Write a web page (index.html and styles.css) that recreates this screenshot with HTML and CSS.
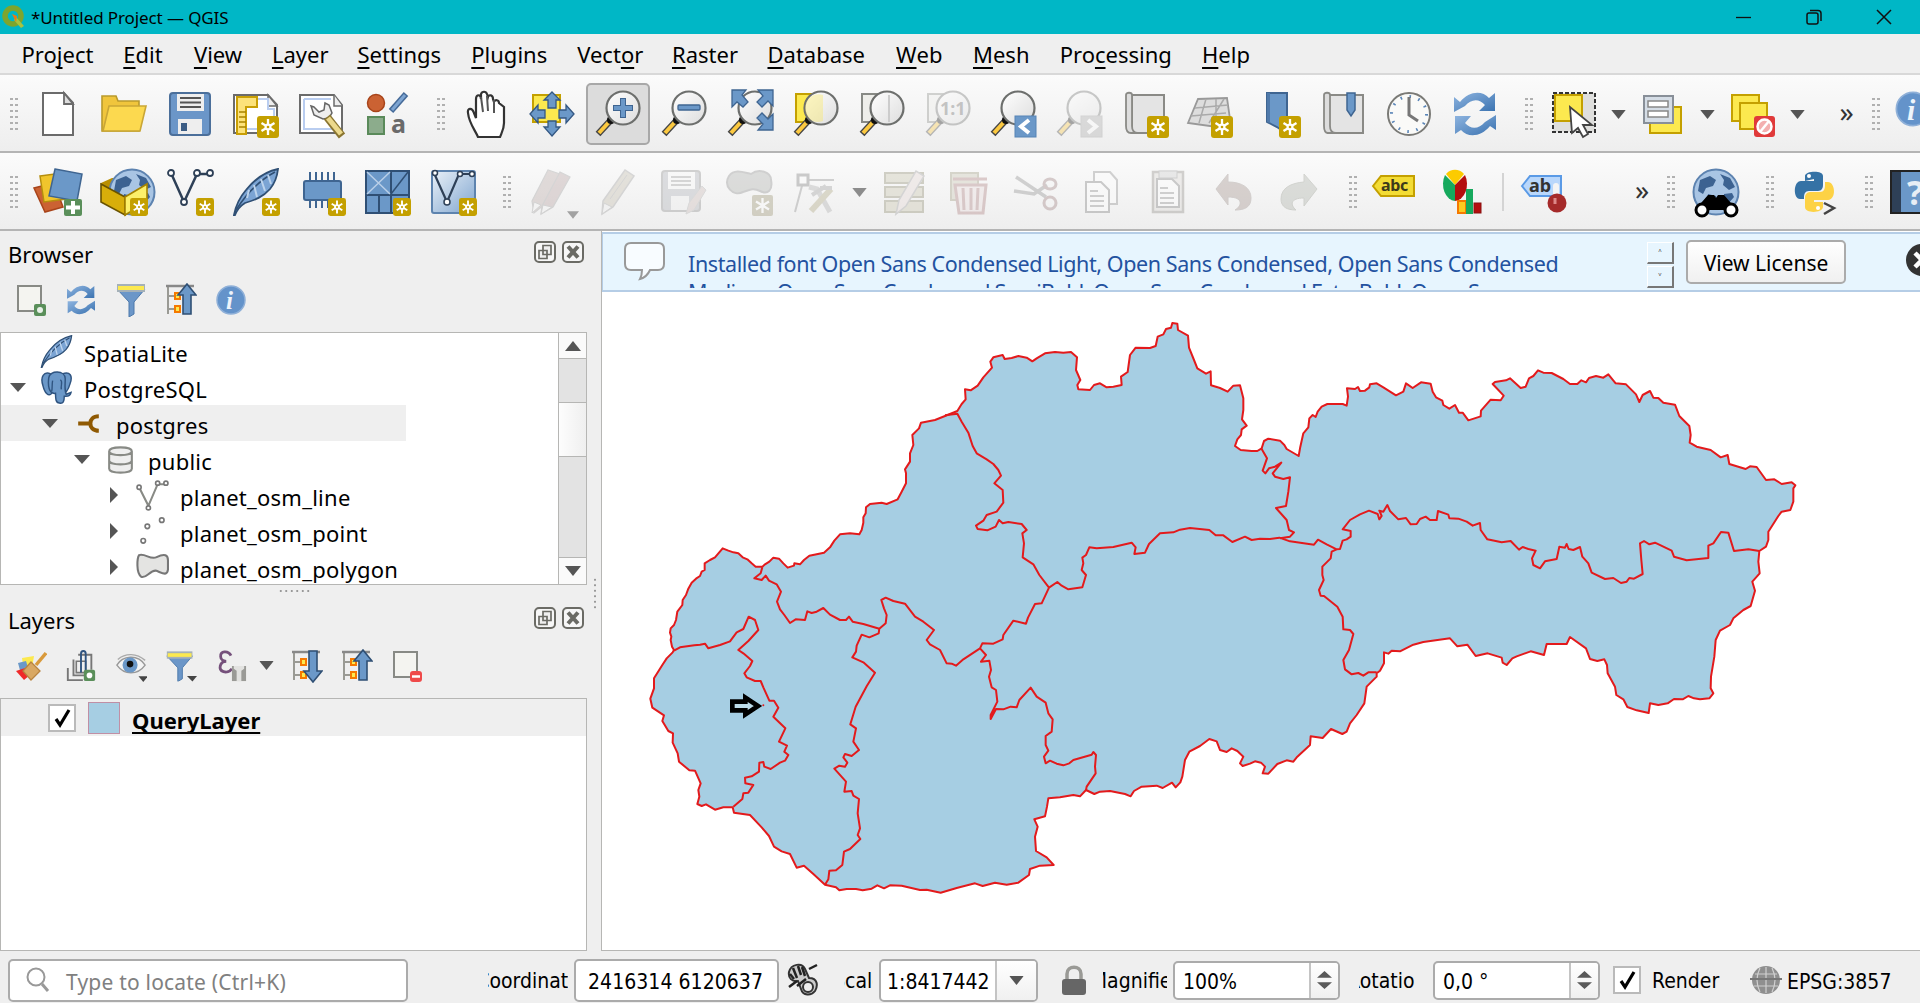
FILE: index.html
```html
<!DOCTYPE html>
<html lang="en">
<head>
<meta charset="utf-8">
<title>*Untitled Project — QGIS</title>
<link rel="stylesheet" href="styles.css">
</head>
<body>
<svg class="defs" width="0" height="0">
<defs>
<linearGradient id="gSheet" x1="0" y1="0" x2="1" y2="1"><stop offset="0" stop-color="#eaf1f8"/><stop offset="1" stop-color="#7fa5cf"/></linearGradient>
<linearGradient id="gLens" x1="0" y1="0" x2="1" y2="1"><stop offset="0" stop-color="#fff"/><stop offset=".5" stop-color="#eee"/><stop offset="1" stop-color="#ddd"/></linearGradient>
<linearGradient id="gBlue" x1="0" y1="0" x2="1" y2="1"><stop offset="0" stop-color="#8fb5e0"/><stop offset="1" stop-color="#3a72b0"/></linearGradient>
<symbol id="star" viewBox="0 0 22 22"><rect width="22" height="22" rx="3" fill="#c4a000"/><path d="M11 3v16M4.500 7l13 8M17.500 7l-13 8" stroke="#fff" stroke-width="2.300"/><circle cx="11" cy="11" r="3.500" fill="#fff"/><circle cx="11" cy="11" r="1.300" fill="#c4a000"/></symbol>
<symbol id="lens" viewBox="0 0 48 48"><path d="M4 44L17 30" stroke="#444" stroke-width="6.500"/><path d="M5 43L15 32" stroke="#fcc940" stroke-width="4"/><circle cx="17" cy="30" r="4" fill="#111"/><circle cx="29" cy="18" r="16.500" fill="url(#gLens)" stroke="#6d6f6d" stroke-width="2.200"/></symbol>
<symbol id="refresh" viewBox="0 0 48 48"><g fill="url(#gBlue)"><path d="M3 22V7l6 5C18 1 31 0 38 8l6-5v18H28l6-6C28 8 20 9 14 16l-11 6z"/><path d="M45 25v15l-6-4C30 47 17 48 10 40l-6 4V26h16l-6 7C20 40 28 39 34 32l11-7z"/></g></symbol>
<symbol id="feather" viewBox="0 0 48 48"><path d="M2 47C4 36 8 29 14 22 22 12 32 4 46 1c-1 9-3 14-8 20-7 8-15 11-25 14C8 38 5 42 3 47z" fill="#7ba4d4" stroke="#2f4f74" stroke-width="1.800"/><path d="M4 42C15 25 28 12 43 4" stroke="#2f4f74" stroke-width="1.600" fill="none"/><path d="M17 22l-2 8M22 17l3 12M29 11l4 12M36 7l3 9" stroke="#bcd3ec" stroke-width="2"/></symbol>
<symbol id="funnel" viewBox="0 0 32 34"><path d="M2 6h28L19 19v12l-5 3V19z" fill="#6b96c8" stroke="#4c78ab" stroke-width="1"/><rect x="2" y="1" width="28" height="8" fill="#a5b1b8"/><rect x="3" y="3" width="26" height="4" fill="#fce94f"/></symbol>
<symbol id="info" viewBox="0 0 32 32"><circle cx="16" cy="16" r="14" fill="#6493ca" stroke="#8fb0d8" stroke-width="1.500"/><text x="11" y="25" font-family="Liberation Serif, serif" font-style="italic" font-weight="bold" font-size="25" fill="#eef4fb">i</text></symbol>
<symbol id="grey-drop" viewBox="0 0 16 10"><path d="M0 0h16L8 10z" fill="#555"/></symbol>
<symbol id="restore" viewBox="0 0 22 22"><rect x="1" y="1" width="20" height="20" rx="4" fill="#f7f7f7" stroke="#6b6b65" stroke-width="2"/><path d="M9 4.500h8v9H9zM5 9.500h8v8H5z" fill="#efefef" stroke="#6b6b65" stroke-width="1.700"/></symbol>
<symbol id="xbox" viewBox="0 0 22 22"><rect x="1" y="1" width="20" height="20" rx="4" fill="#f7f7f7" stroke="#6b6b65" stroke-width="2"/><path d="M6 5.500l10 11M16 5.500l-10 11" stroke="#6b6b65" stroke-width="4"/></symbol>
<symbol id="globe" viewBox="0 0 48 48"><circle cx="24" cy="24" r="22.500" fill="#a9c5e4" stroke="#5d83b0" stroke-width="2"/><path d="M8 12l10-4 6 4-3 6-7 2-3 6-5-3zM28 6l10 4 5 9-6 3-6-5 1-5zM16 26l8 2 2 6-6 8-5-6zM32 26l8-1 2 4-6 7-4-4z" fill="#3c6291"/></symbol>
<symbol id="arrowtree" viewBox="0 0 32 34"><path d="M3 3v28M3 13h7M3 26h7" stroke="#9a9a94" stroke-width="2" fill="none"/><path d="M1 3h28" stroke="#888" stroke-width="2.500"/><path d="M10 10h5v6h-5zM10 23h5v6h-5z" fill="#fce94f" stroke="#f57900" stroke-width="2"/></symbol>
<symbol id="spinpair" viewBox="0 0 20 24"><path d="M10 0l10 9H0zM0 15h20l-10 9z" fill="#5a5a5a"/></symbol>
<symbol id="elephant" viewBox="0 0 32 34"><g fill="#6b98c8" stroke="#2f5480" stroke-width="1.500"><path d="M10 3C3 0-1 6 2 15c2 8 6 12 9 8z"/><path d="M22 3c8-3 11 2 8 10-2 7-5 11-9 10z"/><path d="M8 7c1-8 17-8 17 1 0 7-1 12 1 16l5-2c-1 5-5 4-7 4 0 5-1 8-5 7-4 0-4-5-4-10-7 1-8-8-7-16z"/></g><path d="M12 10c-1 5 0 8-1 11M20 9c3 2 0 6 1 10" stroke="#2f5480" stroke-width="1.400" fill="none"/></symbol>
</defs>
</svg>

<div class="app">
  <header class="titlebar">
    <svg class="logo" viewBox="0 0 24 24"><circle cx="11" cy="11" r="8" fill="none" stroke="#7da52e" stroke-width="5.500"/><path d="M14 12l8 9-3 2-7-8z" fill="#a9c23f"/><path d="M10 9l5 2-1 6z" fill="#ee7913"/></svg>
    <span class="title">*Untitled Project — QGIS</span>
    <svg class="wbtn" viewBox="0 0 16 16"><path d="M0 8.500h15" stroke="#111" stroke-width="1.300"/></svg>
    <svg class="wbtn" viewBox="0 0 16 16"><rect x="1" y="4" width="11" height="11" rx="2" fill="none" stroke="#111" stroke-width="1.500"/><path d="M4 1.500h8q3 0 3 3V12" fill="none" stroke="#111" stroke-width="1.500"/></svg>
    <svg class="wbtn" viewBox="0 0 16 16"><path d="M1 1l14 14M15 1L1 15" stroke="#111" stroke-width="1.500"/></svg>
  </header>

  <nav class="menubar">
    <span>Pro<u>j</u>ect</span><span><u>E</u>dit</span><span><u>V</u>iew</span><span><u>L</u>ayer</span><span><u>S</u>ettings</span><span><u>P</u>lugins</span><span>Vect<u>o</u>r</span><span><u>R</u>aster</span><span><u>D</u>atabase</span><span><u>W</u>eb</span><span><u>M</u>esh</span><span>Pro<u>c</u>essing</span><span><u>H</u>elp</span>
  </nav>

  <div class="toolbar">
    <i class="grip first"></i>
    <div class="tool"><svg viewBox="0 0 48 48"><path d="M9 3h21l9 10v32H9z" fill="#fff" stroke="#6b6b6b" stroke-width="2"/><path d="M30 3v11h9z" fill="#ddd" stroke="#6b6b6b" stroke-width="1.800"/></svg></div>
    <div class="tool"><svg viewBox="0 0 48 48"><path d="M2 41V6h14l2 5h21v30z" fill="#f0c53c" stroke="#b99a2c" stroke-width="1.600"/><path d="M3 41l6-25h37l-6 25z" fill="#fcd94f" stroke="#c9a636" stroke-width="1.600"/></svg></div>
    <div class="tool"><svg viewBox="0 0 48 48"><rect x="4" y="3" width="40" height="42" rx="3" fill="#6b96c8" stroke="#4b6f9a" stroke-width="2"/><rect x="11" y="4" width="27" height="17" fill="#eee"/><path d="M14 8h21M14 12.500h21M14 17h21" stroke="#555" stroke-width="2"/><rect x="12" y="29" width="24" height="15" fill="#eee"/><rect x="15" y="33" width="6" height="8" fill="#3c5d85"/></svg></div>
    <div class="tool"><svg viewBox="0 0 48 48"><path d="M2 5h34l9 10v28H2z" fill="#fff" stroke="#6b6b6b" stroke-width="2"/><path d="M36 5v11h9z" fill="#eee" stroke="#6b6b6b" stroke-width="1.500"/><path d="M26 9h10v10h6v20H14" fill="none" stroke="#b9cdf0" stroke-width="2"/><path d="M5 7h20v10H14v27H5z" fill="#fce27a" stroke="#c99f05" stroke-width="2"/><path d="M7 22h7M7 27h7M7 32h7M7 37h7" stroke="#a88400" stroke-width="1.500"/><use href="#star" x="25" y="26" width="22" height="22"/></svg></div>
    <div class="tool"><svg viewBox="0 0 48 48"><path d="M2 5h34l8 10v28H2z" fill="#fff" stroke="#6b6b6b" stroke-width="2"/><path d="M36 5v11h8" fill="#eee" stroke="#6b6b6b" stroke-width="1.500"/><path d="M6 9h27M6 9v30h32" fill="none" stroke="#b9cdf0" stroke-width="2"/><path d="M16 17l5 5 5-2 1-7 4 2 3 8-3 5-6 1-9-4-3-9z" fill="#eee" stroke="#666" stroke-width="1.500"/><path d="M29 27l15 19" stroke="#8a7530" stroke-width="8"/><path d="M30 28l13 16" stroke="#ecd98c" stroke-width="5"/></svg></div>
    <div class="tool"><svg viewBox="0 0 48 48"><circle cx="13" cy="13" r="8.500" fill="#cb6233" stroke="#a8441a" stroke-width="1.500"/><path d="M28 21L43 4" stroke="#456a98" stroke-width="6"/><path d="M29 20L42 5" stroke="#7ea5d2" stroke-width="3"/><rect x="5" y="27" width="16" height="17" fill="#8cac8c" stroke="#5a8a5a" stroke-width="2"/><text x="28" y="43" class="t-a">a</text></svg></div>
    <i class="grip"></i>
    <div class="tool"><svg viewBox="0 0 48 48"><path d="M16 46c-3-7-9-14-10-24-1-5 4-6 6 0l2 5V8c0-5 5-5 5 0V3c1-3 5-3 6 0l1 3c1-3 5-2 5 2l1 3c1-3 5-2 5 1l5 4v16c0 6-2 9-4 14z" transform="translate(0 1)" fill="#fff" stroke="#333" stroke-width="2.200"/><path d="M19 7l2 15M25 6l1 15M32 10v13" stroke="#555" stroke-width="2"/></svg></div>
    <div class="tool"><svg viewBox="0 0 48 48"><rect x="5" y="5" width="27" height="27" fill="#fce94f" stroke="#c4a000" stroke-width="2"/><path d="M24 2l8 8h-4v8h-8v-8h-4zM24 46l8-9h-4v-6h-8v6h-4zM2 24l8-9v5h7v8h-7v5zM46 24l-8-9v5h-7v8h7v5z" fill="#6b98c8" stroke="#345884" stroke-width="1.300"/></svg></div>
    <div class="tool active"><svg viewBox="0 0 48 48"><use href="#lens"/><path d="M29 8v20M19 18h20" stroke="#3f6591" stroke-width="6"/><path d="M29 9v18M20 18h18" stroke="#6b98c8" stroke-width="4"/></svg></div>
    <div class="tool"><svg viewBox="0 0 48 48"><use href="#lens"/><rect x="18" y="15" width="22" height="5" rx="1" fill="#6b98c8" stroke="#3f6591" stroke-width="1.300"/></svg></div>
    <div class="tool"><svg viewBox="0 0 48 48"><use href="#lens"/><path d="M6 0h14l-4 5 6 7-5 5-6-5-5 5zM47 0v16l-5-5-6 6-5-5 6-6-5-6zM47 40V24l-5 5-6-6-5 5 6 6-5 6z" fill="#6b98c8" stroke="#3f6591" stroke-width="1.300"/></svg></div>
    <div class="tool"><svg viewBox="0 0 48 48"><rect x="4" y="4" width="24" height="28" fill="#fce94f" stroke="#c4a000" stroke-width="2"/><use href="#lens"/><path d="M31 5v26c-10 4-18-4-18-13S22 2 31 5z" fill="#fce94f" opacity=".35"/></svg></div>
    <div class="tool"><svg viewBox="0 0 48 48"><rect x="4" y="4" width="24" height="28" fill="#eeeeea" stroke="#888a85" stroke-width="2"/><use href="#lens"/><path d="M31 5v27" stroke="#ccc" stroke-width="2"/></svg></div>
    <div class="tool off"><svg viewBox="0 0 48 48"><rect x="4" y="4" width="24" height="28" fill="#eeeeea" stroke="#888a85" stroke-width="2"/><use href="#lens"/><text x="16" y="25" class="t-11">1:1</text></svg></div>
    <div class="tool"><svg viewBox="0 0 48 48"><use href="#lens"/><rect x="26" y="26" width="21" height="21" fill="#6b98c8" stroke="#5784b5"/><path d="M40 30l-8 6.500 8 6.500" fill="none" stroke="#fff" stroke-width="4"/></svg></div>
    <div class="tool off"><svg viewBox="0 0 48 48"><use href="#lens"/><rect x="26" y="26" width="21" height="21" fill="#aaa" stroke="#999"/><path d="M33 30l8 6.500-8 6.500" fill="none" stroke="#fff" stroke-width="4"/></svg></div>
    <div class="tool"><svg viewBox="0 0 48 48"><path d="M11 5h32v38H11z" fill="#e4e4e4" stroke="#8a8a86" stroke-width="2"/><path d="M5 5c0-3 6-3 6 0v31c0 4 2 7 6 7H10c-4 0-5-3-5-7z" fill="#ddd" stroke="#8a8a86" stroke-width="1.800"/><use href="#star" x="26" y="26" width="22" height="22"/></svg></div>
    <div class="tool"><svg viewBox="0 0 48 48"><path d="M1 33L11 9l29-1 3 21-13 8z" fill="#ddd" stroke="#999" stroke-width="1.800"/><path d="M8 18l33-3M4 26l35-3M19 9l-7 24M29 9v25M37 9L22 33" stroke="#aaa" stroke-width="1.500" fill="none"/><use href="#star" x="24" y="26" width="22" height="22"/></svg></div>
    <div class="tool"><svg viewBox="0 0 48 48"><path d="M14 3h20v41l-10-7-10-5z" fill="#6b98c8" stroke="#3f6591" stroke-width="2"/><path d="M14 3h3v30l-3-1z" fill="#4f79aa"/><use href="#star" x="26" y="26" width="22" height="22"/></svg></div>
    <div class="tool"><svg viewBox="0 0 48 48"><path d="M9 5h35v38H9z" fill="#e4e4e4" stroke="#8a8a86" stroke-width="2"/><path d="M5 5c0-3 6-3 6 0v31c0 4 2 7 6 7H9c-3 0-4-3-4-7z" fill="#ddd" stroke="#8a8a86" stroke-width="1.800"/><path d="M28 3h8v17l-4 6-4-6z" fill="#6b98c8" stroke="#3f6591" stroke-width="1.500"/></svg></div>
    <div class="tool"><svg viewBox="0 0 48 48"><circle cx="24" cy="24" r="21" fill="#fafaf8" stroke="#7a7a76" stroke-width="2"/><circle cx="24" cy="24" r="17.500" fill="none" stroke="#5b86b8" stroke-width="3" stroke-dasharray="1.600 7.560"/><path d="M24 7v18l9 6" fill="none" stroke="#777" stroke-width="3"/></svg></div>
    <div class="tool"><svg viewBox="0 0 48 48"><use href="#refresh"/></svg></div>
    <i class="grip"></i>
    <div class="tool"><svg viewBox="0 0 48 48"><rect x="3" y="3" width="42" height="39" fill="#dfdfdd" stroke="#333" stroke-width="2" stroke-dasharray="4 2"/><rect x="5" y="5" width="27" height="26" fill="#fce94f" stroke="#c4a000" stroke-width="2"/><path d="M20 17l2 26 6-5 5 9 5-3-5-9h9z" fill="#fff" stroke="#444" stroke-width="1.800"/></svg></div>
    <div class="drop"><svg><use href="#grey-drop"/></svg></div>
    <div class="tool"><svg viewBox="0 0 48 48"><rect x="11" y="17" width="31" height="26" fill="#fce94f" stroke="#c4a000" stroke-width="2"/><rect x="5" y="6" width="29" height="27" fill="#d5dde6" stroke="#888f98" stroke-width="2"/><path d="M9 11h20v6H9zM9 21h20v6H9z" fill="#fff" stroke="#888" stroke-width="1.500"/></svg></div>
    <div class="drop"><svg><use href="#grey-drop"/></svg></div>
    <div class="tool"><svg viewBox="0 0 48 48"><rect x="4" y="5" width="27" height="26" fill="#fce94f" stroke="#c4a000" stroke-width="2"/><rect x="12" y="13" width="27" height="26" fill="#fce94f" stroke="#c4a000" stroke-width="2"/><rect x="26" y="26" width="21" height="21" rx="3" fill="#e03a3a"/><circle cx="36.500" cy="36.500" r="7" fill="#f3b0b0" stroke="#fff" stroke-width="2.500"/><path d="M41 31l-9 11" stroke="#fff" stroke-width="2.500"/></svg></div>
    <div class="drop"><svg><use href="#grey-drop"/></svg></div>
    <span class="more">»</span>
    <i class="grip"></i>
    <div class="tool edge"><svg class="bigger" viewBox="0 0 32 32"><use href="#info"/></svg></div>
  </div>

  <div class="toolbar second">
    <i class="grip first"></i>
    <div class="tool"><svg viewBox="0 0 48 48"><path d="M0 20l20-5 9 24-18 5z" fill="#cb6233" stroke="#a8441a" stroke-width="1.500"/><path d="M6 8l22-3 4 26-22 3z" fill="#f0c52d" stroke="#b58e0e" stroke-width="1.500"/><path d="M21 1l27 5-5 27-28-5z" fill="#6b98c8" stroke="#3f6591" stroke-width="1.500"/><rect x="30" y="31" width="18" height="17" rx="2" fill="#5a8f5a"/><path d="M39 33v13M32 39.500h14" stroke="#fff" stroke-width="4"/></svg></div>
    <div class="tool"><svg viewBox="0 0 48 48"><path d="M1 15l11-5h24l11 5v5L24 32 1 20z" fill="#b98f00"/><svg x="8" y="0" width="33" height="33"><use href="#globe"/></svg><path d="M1 16l24 13v18L1 34z" fill="#d8ae0a" stroke="#6a5300" stroke-width="1.600"/><path d="M25 29l22-13v18L25 47z" fill="#fcf06a" stroke="#a58300" stroke-width="1.600"/><use href="#star" x="30" y="30" width="18" height="18"/></svg></div>
    <div class="tool"><svg viewBox="0 0 48 48"><path d="M5 5l13 29L31 6h13" fill="none" stroke="#2e4057" stroke-width="2.500"/><g fill="#fff" stroke="#2e4057" stroke-width="1.800"><circle cx="5" cy="5" r="3"/><circle cx="31" cy="5" r="3"/><circle cx="44" cy="5" r="3"/><circle cx="18" cy="34" r="3"/></g><use href="#star" x="30" y="30" width="18" height="18"/></svg></div>
    <div class="tool"><svg viewBox="0 0 48 48"><use href="#feather"/><use href="#star" x="30" y="30" width="18" height="18"/></svg></div>
    <div class="tool"><svg viewBox="0 0 48 48"><path d="M12 4v36M18 4v36M24 4v36M30 4v36M36 4v36" stroke="#3f6591" stroke-width="2"/><rect x="6" y="13" width="37" height="19" rx="2" fill="#6b98c8" stroke="#3f6591" stroke-width="2"/><use href="#star" x="30" y="30" width="18" height="18"/></svg></div>
    <div class="tool"><svg viewBox="0 0 48 48"><rect x="3" y="3" width="43" height="42" fill="#6b98c8" stroke="#2f4f74" stroke-width="2"/><path d="M3 27h43M28 3v24M16 27v18M28 27v18" stroke="#2f4f74" stroke-width="2"/><path d="M4 4l23 22M27 4L4 26" stroke="#b9cfe8" stroke-width="1.500"/><path d="M45 4L28 26" stroke="#2f4f74" stroke-width="1.500"/><use href="#star" x="30" y="30" width="18" height="18"/></svg></div>
    <div class="tool"><svg viewBox="0 0 48 48"><rect x="3" y="3" width="43" height="42" rx="2" fill="url(#gSheet)" stroke="#5d83ae" stroke-width="2"/><path d="M5 5l13 29L30 6h14" fill="none" stroke="#2e4057" stroke-width="2.200"/><g fill="#fff" stroke="#2e4057" stroke-width="1.500"><circle cx="6" cy="5" r="2.500"/><circle cx="31" cy="6" r="2.500"/><circle cx="43" cy="6" r="2.500"/><circle cx="18" cy="34" r="3"/></g><use href="#star" x="30" y="30" width="18" height="18"/></svg></div>
    <i class="grip"></i>
    <div class="tool"><svg class="faded" viewBox="0 0 48 48"><g stroke="#999" stroke-width="1.200"><path d="M4 33L20 2l12 4-15 30-11 9z" fill="#b7a6a3"/><path d="M14 38L32 4l10 5-17 30-12 7z" fill="#b39c9c"/></g><path d="M4 45l2-11 7 3zM13 46l2-9 9 2z" fill="#f3f3f3" stroke="#999"/></svg><svg class="corner-drop"><use href="#grey-drop"/></svg></div>
    <div class="tool off"><svg viewBox="0 0 48 48"><path d="M9 33L31 2l9 6-21 31-11 7z" fill="#bfb9a8" stroke="#999" stroke-width="1.500"/><path d="M8 46l2-11 8 4zM16 31l17-24" fill="#eee" stroke="#999"/></svg></div>
    <div class="tool off"><svg viewBox="0 0 48 48"><rect x="2" y="3" width="38" height="40" rx="3" fill="#a9acb3" stroke="#888" stroke-width="2"/><rect x="8" y="4" width="27" height="17" fill="#f8f8f8"/><path d="M11 9h20M11 13h20M11 17h20M13 31v9" stroke="#999" stroke-width="1.800"/><path d="M11 28h18v14H11z" fill="#eee"/><path d="M26 46l3-11L42 18l4 4-12 20z" fill="#c9b8b4" stroke="#aaa"/></svg></div>
    <div class="tool off"><svg viewBox="0 0 48 48"><path d="M3 8c6-8 16-3 22-2 8-6 20-2 20 6 2 10-3 15-11 11-8-4-12 0-17 1C7 29-3 18 3 8z" fill="#aaaca8" stroke="#888" stroke-width="2"/><g transform="translate(26 27)"><rect width="21" height="21" rx="2" fill="#968f6c"/><path d="M10.500 3v15M4 6.500l13 8M17 6.500l-13 8" stroke="#fff" stroke-width="2.300"/></g></svg></div>
    <div class="tool off"><svg viewBox="0 0 48 48"><path d="M11 12h31M11 14L3 44" stroke="#888" stroke-width="2"/><rect x="6" y="7" width="10" height="10" fill="#fff" stroke="#777" stroke-width="3"/><path d="M17 19l8 2 13 23" stroke="#aaa" stroke-width="5" fill="none"/><path d="M19 43l20-22" stroke="#aaa27a" stroke-width="6"/><path d="M28 20l12 0M20 27l14-9" stroke="#999" stroke-width="4"/></svg></div>
    <div class="drop tight"><svg class="lighter"><use href="#grey-drop"/></svg></div>
    <div class="tool off"><svg viewBox="0 0 48 48"><path d="M5 5h38v10H5zM5 19h38v10H5zM5 33h38v11H5z" fill="#c5c1a8" stroke="#888568" stroke-width="2"/><path d="M16 46l3-14L36 3l8 5-18 30z" fill="#e2d4d1" stroke="#999" stroke-width="1.500"/></svg></div>
    <div class="tool off"><svg viewBox="0 0 48 48"><path d="M5 5h27v27H5z" fill="#c6c3ae" stroke="#999578" stroke-width="2"/><path d="M9 17h31l-3 28H13z" fill="#e8dada" stroke="#a87878" stroke-width="3"/><path d="M17 20l1 22M25 20v22M32 20l-1 22M7 11h34" stroke="#a87878" stroke-width="3"/></svg></div>
    <div class="tool off"><svg viewBox="0 0 48 48"><path d="M4 9l30 20M2 23l20 3 13-9" fill="none" stroke="#888" stroke-width="3.500"/><g fill="none" stroke="#987878" stroke-width="3"><ellipse cx="38" cy="16" rx="6" ry="5"/><ellipse cx="38" cy="35" rx="6" ry="6"/></g></svg></div>
    <div class="tool off"><svg viewBox="0 0 48 48"><path d="M16 4h16l7 8v24H16z" fill="#fff" stroke="#888" stroke-width="2"/><path d="M8 14h15l8 8v22H8z" fill="#fff" stroke="#777" stroke-width="2"/><path d="M12 23h8M12 28h14M12 33h14M12 38h14" stroke="#888" stroke-width="2"/></svg></div>
    <div class="tool off"><svg viewBox="0 0 48 48"><rect x="9" y="4" width="30" height="40" fill="#dad6d2" stroke="#8a8680" stroke-width="2.500"/><path d="M13 11h15l7 7v21H13z" fill="#fff" stroke="#777" stroke-width="2"/><path d="M16 20h8M16 25h14M16 30h14M16 35h14" stroke="#888" stroke-width="2"/><rect x="15" y="3" width="18" height="7" fill="#ccc" stroke="#888"/></svg></div>
    <div class="tool off"><svg viewBox="0 0 48 48"><path d="M6 21L18 6v8c14 0 23 6 23 16 0 9-6 12-16 12 7-4 9-13-7-13v8z" fill="#9d8b85" stroke="#918580"/></svg></div>
    <div class="tool off"><svg viewBox="0 0 48 48"><path d="M42 21L29 6v8C16 15 6 20 6 31c0 8 6 11 15 11-6-5-6-12 8-12v8z" fill="#a9ada4" stroke="#909488"/></svg></div>
    <i class="grip narrow"></i>
    <div class="tool"><svg viewBox="0 0 48 48"><path d="M3 18l8-10h33v20H11z" fill="#f3dc35" stroke="#c4a000" stroke-width="2"/><text x="11" y="23" class="t-abc">abc</text></svg></div>
    <div class="tool diag"><svg viewBox="0 0 48 48"><path d="M15 17L6 6a13 15 0 0118 0z" fill="#fccb00"/><path d="M15 17V33A13 17 0 015 7z" fill="#16a95d"/><path d="M15 17l10-10a13 17 0 01-10 26z" fill="#b40e0e"/><rect x="18" y="33" width="8" height="12" fill="#fccb20" stroke="#f57900" stroke-width="2"/><rect x="26" y="21" width="7" height="25" fill="#16a95d"/><rect x="34" y="35" width="7" height="10" fill="#b40e0e" stroke="#811"/></svg></div>
    <i class="vsep"></i>
    <div class="tool"><svg viewBox="0 0 48 48"><path d="M3 18l8-10h31v20H11z" fill="#b9d7fb" stroke="#5a9ae6" stroke-width="2"/><text x="10" y="24" class="t-ab">ab</text><path d="M37 18v14" stroke="#f4f4f4" stroke-width="6" stroke-linecap="round"/><ellipse cx="38" cy="35" rx="9.500" ry="9.500" fill="#a52a2a"/><path d="M36 30v6" stroke="#d88" stroke-width="3"/></svg></div>
    <span class="more">»</span>
    <i class="grip flush"></i>
    <div class="tool"><svg viewBox="0 0 48 48"><use href="#globe"/><path d="M16 27h6l2 3 2-3h6l13 15H3z" fill="#000"/><circle cx="10" cy="42" r="6" fill="#fff" stroke="#000" stroke-width="3"/><circle cx="39" cy="42" r="6" fill="#fff" stroke="#000" stroke-width="3"/></svg></div>
    <i class="grip"></i>
    <div class="tool"><svg viewBox="0 0 48 48"><path d="M14 13V8c0-5 18-6 18 0v9c0 5-3 6-6 6h-8c-4 0-5 3-5 7v1H9C2 31 2 13 10 13h13v-2z" fill="#3572a5"/><circle cx="18" cy="8" r="2" fill="#fff"/><path d="M34 14h3c7 0 9 17 0 18H23v2h9v5c0 6-18 7-18 0v-9c0-5 3-6 6-6h9c4 0 5-3 5-7z" fill="#fdd245"/><circle cx="27" cy="40" r="2" fill="#fff"/><path d="M33 35l10 5-10 6" fill="none" stroke="#444" stroke-width="2.500"/></svg></div>
    <i class="grip"></i>
    <div class="tool edge book"><svg viewBox="0 0 48 48"><rect x="1" y="3" width="50" height="42" fill="#6b98c8" stroke="#222" stroke-width="2"/><rect x="2" y="4" width="9" height="40" fill="#2e4057"/><text x="17" y="37" class="t-q">?</text></svg></div>
  </div>

  <main class="work">
    <aside class="docks">
      <section class="dock browser">
        <div class="dock-title"><span>Browser</span><svg viewBox="0 0 22 22"><use href="#restore"/></svg><svg viewBox="0 0 22 22"><use href="#xbox"/></svg></div>
        <div class="dock-tools">
          <svg viewBox="0 0 32 34"><path d="M3 3h23v25H3z" fill="#f4f4f0" stroke="#888a85" stroke-width="2"/><rect x="19" y="21" width="12" height="12" rx="2" fill="#5a8f5a"/><circle cx="25" cy="27" r="3" fill="#e8f0e8"/></svg>
          <svg viewBox="0 0 48 48"><use href="#refresh"/></svg>
          <svg><use href="#funnel"/></svg>
          <svg viewBox="0 0 32 34"><use href="#arrowtree"/><path d="M22 1l9 11h-5v19h-8V12h-5z" fill="#6b98c8" stroke="#2f4f74" stroke-width="1.600"/></svg>
          <svg viewBox="0 0 32 32"><use href="#info"/></svg>
        </div>
        <div class="tree">
          <div class="rows">
            <div class="row l0"><i class="tw"></i><svg class="ri" viewBox="0 0 48 48"><use href="#feather"/></svg><span>SpatiaLite</span></div>
            <div class="row l0"><svg class="tw" viewBox="0 0 16 16"><path d="M0 4h16l-8 9z"/></svg><svg class="ri"><use href="#elephant"/></svg><span>PostgreSQL</span></div>
            <div class="row l1 hl"><svg class="tw" viewBox="0 0 16 16"><path d="M0 4h16l-8 9z"/></svg><svg class="ri" viewBox="0 0 32 32"><path d="M6 16h12M26 9c-11 0-11 14 0 14" fill="none" stroke="#8f5902" stroke-width="4"/></svg><span>postgres</span></div>
            <div class="row l2"><svg class="tw" viewBox="0 0 16 16"><path d="M0 4h16l-8 9z"/></svg><svg class="ri" viewBox="0 0 32 32"><path d="M5 8v17c0 5 22 5 22 0V8c0-5-22-5-22 0zM5 8c0 5 22 5 22 0M5 17c0 5 22 5 22 0" fill="#eee" stroke="#888a85" stroke-width="2"/></svg><span>public</span></div>
            <div class="row l3"><svg class="tw" viewBox="0 0 16 16"><path d="M4 0l8 8-8 8z"/></svg><svg class="ri" viewBox="0 0 32 32"><path d="M3 8l9 18L21 5h9" fill="none" stroke="#888a85" stroke-width="2"/><g fill="#fff" stroke="#777" stroke-width="1.600"><circle cx="3" cy="8" r="2"/><circle cx="12" cy="28" r="2"/><circle cx="21" cy="4" r="2"/><circle cx="29" cy="4" r="2"/></g></svg><span>planet_osm_line</span></div>
            <div class="row l3"><svg class="tw" viewBox="0 0 16 16"><path d="M4 0l8 8-8 8z"/></svg><svg class="ri" viewBox="0 0 32 32"><g fill="#fff" stroke="#777" stroke-width="1.600"><circle cx="25" cy="5" r="2.200"/><circle cx="11" cy="11" r="2.200"/><circle cx="7" cy="25" r="2.200"/></g></svg><span>planet_osm_point</span></div>
            <div class="row l3"><svg class="tw" viewBox="0 0 16 16"><path d="M4 0l8 8-8 8z"/></svg><svg class="ri" viewBox="0 0 32 32"><path d="M3 4c6-2 11 5 17 2 8-4 11-2 11 3v9c-1 7-6 3-12 1-6 0-9 8-14 6-5-4-4-18-2-21z" fill="#e4e4e2" stroke="#777" stroke-width="2"/></svg><span>planet_osm_polygon</span></div>
          </div>
          <div class="scroll"><div class="sb"><svg viewBox="0 0 16 12"><path d="M8 1l8 10H0z" fill="#555"/></svg></div><div class="trk a"></div><div class="thumb"></div><div class="trk b"></div><div class="sb dn"><svg viewBox="0 0 16 12"><path d="M0 1h16L8 11z" fill="#555"/></svg></div></div>
        </div>
      </section>
      <div class="hsplit"><i></i></div>
      <section class="dock layers">
        <div class="dock-title"><span>Layers</span><svg viewBox="0 0 22 22"><use href="#restore"/></svg><svg viewBox="0 0 22 22"><use href="#xbox"/></svg></div>
        <div class="dock-tools">
          <svg viewBox="0 0 32 34"><path d="M7 9l12-2-2 12-8 4z" fill="#fce94f"/><path d="M3 14l8-2 3 10-8 3z" fill="#6b98c8"/><path d="M1 22l9-3 5 7-6 5z" fill="#ef2929"/><path d="M31 4L21 16" stroke="#d99a3c" stroke-width="3.500"/><path d="M16 13l9 9-9 9-8-9z" fill="#d9a863" stroke="#b98440" stroke-width="1.300"/></svg>
          <svg viewBox="0 0 34 34"><path d="M3 19v13h16M9 10v17h14M14 5h14v16" fill="none" stroke="#777" stroke-width="2"/><path d="M12 12h10v12H12z" fill="none" stroke="#777" stroke-width="1.700"/><path d="M17 24V4c0-4 5-4 5 0v18" fill="none" stroke="#2f5480" stroke-width="2"/><rect x="20" y="21" width="12" height="12" rx="2" fill="#5a8f5a"/><circle cx="26" cy="27" r="3" fill="#fff"/></svg>
          <svg viewBox="0 0 34 34"><path d="M2 16C8 6 24 4 32 16 24 27 10 27 2 16z" fill="#f4f4f4" stroke="#999" stroke-width="1.500"/><path d="M3 10C11 3 23 3 32 11" fill="none" stroke="#aaa" stroke-width="1.500"/><circle cx="16" cy="16" r="8" fill="#6b98c8"/><circle cx="16" cy="15" r="3.500" fill="#111"/><path d="M25 28h10l-5 6z" fill="#444"/></svg>
          <svg class="wide" viewBox="0 0 35 34"><svg width="30" height="34"><use href="#funnel"/></svg><path d="M24 28h11l-5 6z" fill="#444"/></svg>
          <svg viewBox="0 0 34 34"><path d="M17 6C14 0 5 1 6 7c0 3 3 5 6 5-7 0-9 9-3 11 3 1 7 0 9-3" fill="none" stroke="#75507b" stroke-width="3"/><path d="M18 17h15v16H18z" fill="#9a9a96"/><path d="M20 17h11v3l-3 2v11h-5V22l-3-2z" fill="#e2e2e0"/></svg>
          <svg class="mini" viewBox="0 0 16 10"><use href="#grey-drop"/></svg>
          <svg viewBox="0 0 32 34"><use href="#arrowtree"/><path d="M18 2h8v20h5l-9 11-9-11h5z" fill="#6b98c8" stroke="#2f4f74" stroke-width="1.600"/></svg>
          <svg viewBox="0 0 32 34"><use href="#arrowtree"/><path d="M22 1l9 11h-5v19h-8V12h-5z" fill="#6b98c8" stroke="#2f4f74" stroke-width="1.600"/></svg>
          <svg viewBox="0 0 32 34"><path d="M3 3h23v25H3z" fill="#f4f4f0" stroke="#888a85" stroke-width="2"/><rect x="19" y="22" width="12" height="11" rx="3" fill="#ef4a4a"/><path d="M21 27.500h8" stroke="#fff" stroke-width="2.500"/></svg>
        </div>
        <div class="tree list">
          <div class="layer"><span class="check"><svg viewBox="0 0 24 24"><path d="M6 13l4 6L19 4" fill="none" stroke="#000" stroke-width="3.200"/></svg></span><i class="swatch"></i><b>QueryLayer</b></div>
        </div>
      </section>
    </aside>
    <div class="vsplit"><i></i></div>
    <section class="canvas">
      <div class="message">
        <svg class="bubble" viewBox="0 0 42 40"><path d="M7 2h27q6 0 6 6v15q0 6-6 6h-8q-3 7-10 9 2-4 2-9H7q-6 0-6-6V8q0-6 6-6z" fill="#f8fcff" stroke="#999" stroke-width="2"/></svg>
        <p>Installed font Open Sans Condensed Light, Open Sans Condensed, Open Sans Condensed<br><span>Medium, Open Sans Condensed SemiBold, Open Sans Condensed ExtraBold, Open Sans</span></p>
        <div class="steps"><span>˄</span><span>˅</span></div>
        <button>View License</button>
        <svg class="close" viewBox="0 0 32 32"><circle cx="16" cy="16" r="16" fill="#333"/><path d="M9 9l14 14M23 9L9 23" stroke="#fff" stroke-width="4.500"/></svg>
      </div>
      <svg class="map" viewBox="6 -24 3954 1974">
        <path class="land" d="M222 1050L216 1040 212 1020 214 1010 210 998 212 985 222 975 228 960 232 935 247 915 248 900 258 885 265 866 275 848 288 836 300 828 305 815 314 810 314 790 330 780 345 772 368 745 385 752 400 757 415 760 428 772 442 778 455 790 467 800 487 800 495 793 508 785 520 773 537 776 550 790 563 803 582 797 583 790 600 793 612 780 628 767 672 758 690 742 703 722 720 703 750 700 778 703 785 690 790 668 790 652 797 640 798 622 810 612 845 608 860 612 893 598 905 575 918 550 918 520 915 508 930 485 930 460 940 435 937 405 957 385 963 368 1005 360 1035 348 1072 333 1085 312 1097 298 1095 268 1112 271 1133 257 1150 232 1176 203 1171 185 1180 172 1208 165 1214 177 1235 174 1255 168 1280 173 1297 184 1310 175 1335 160 1365 156 1390 158 1413 156 1431 172 1428 210 1441 240 1432 255 1435 268 1470 270 1482 255 1500 250 1520 262 1540 260 1565 255 1563 230 1583 216 1590 165 1607 143 1650 144 1667 138 1673 110 1690 103 1698 87 1713 83 1717 69 1732 71 1734 90 1764 107 1767 143 1782 180 1792 205 1818 221 1832 214 1833 256 1860 264 1883 275 1900 257 1920 256 1930 295 1930 330 1926 358 1940 377 1925 388 1923 405 1912 418 1905 438 1922 450 1955 453 1972 453 1985 445 1992 423 2005 416 2040 422 2053 435 2060 447 2096 468 2101 440 2110 400 2125 382 2128 355 2138 345 2147 351 2153 335 2165 320 2182 312 2228 312 2240 317 2244 290 2241 265 2265 267 2274 261 2280 273 2295 272 2308 262 2310 253 2330 250 2350 262 2388 286 2410 275 2418 250 2438 264 2463 247 2492 251 2498 275 2508 292 2527 302 2530 315 2548 326 2565 315 2577 338 2588 338 2605 361 2642 349 2643 332 2672 299 2702 301 2711 287 2678 252 2685 246 2718 241 2730 235 2762 264 2777 260 2787 235 2800 228 2814 211 2830 218 2855 219 2890 237 2910 252 2932 252 2944 241 2958 247 2967 234 2988 228 3010 233 3025 223 3047 250 3078 253 3108 283 3118 306 3128 285 3150 273 3160 293 3175 294 3190 308 3225 314 3238 348 3268 378 3272 405 3269 428 3290 440 3332 450 3362 472 3383 465 3388 492 3437 507 3450 499 3470 501 3498 540 3523 538 3545 552 3575 547 3586 556 3580 565 3580 605 3571 630 3545 635 3535 648 3505 695 3505 720 3498 740 3478 753 3475 785 3479 820 3457 845 3465 872 3452 918 3430 930 3400 955 3390 975 3360 992 3347 1020 3343 1070 3333 1130 3332 1165 3340 1180 3328 1195 3300 1198 3282 1195 3265 1188 3248 1198 3222 1197 3203 1210 3175 1215 3150 1210 3146 1239 3110 1231 3082 1221 3070 1198 3049 1185 3045 1160 3023 1120 3021 1095 3013 1078 2992 1083 2970 1077 2958 1045 2910 1011 2900 1032 2840 1032 2832 1065 2792 1054 2750 1069 2737 1075 2720 1095 2708 1088 2705 1073 2663 1060 2627 1068 2602 1034 2572 1039 2550 1015 2470 1026 2440 1034 2400 1054 2375 1052 2365 1061 2352 1057 2352 1090 2340 1112 2330 1120 2330 1130 2300 1160 2293 1210 2270 1245 2250 1270 2240 1295 2227 1302 2193 1287 2168 1314 2132 1309 2130 1335 2092 1370 2080 1385 2060 1381 2032 1392 2005 1421 1988 1420 1995 1400 1983 1388 1965 1384 1950 1391 1928 1398 1920 1390 1930 1370 1912 1353 1895 1345 1880 1356 1860 1350 1850 1324 1828 1317 1800 1338 1768 1355 1755 1380 1747 1430 1741 1447 1727 1462 1716 1448 1688 1464 1670 1457 1625 1460 1602 1473 1592 1489 1575 1482 1530 1473 1500 1475 1483 1482 1458 1470 1440 1489 1420 1485 1380 1492 1345 1495 1341 1520 1335 1549 1303 1558 1313 1580 1305 1610 1308 1653 1340 1672 1361 1695 1320 1697 1290 1707 1287 1725 1255 1748 1220 1754 1185 1748 1148 1758 1125 1750 1070 1764 1022 1778 980 1769 960 1770 905 1757 870 1756 852 1765 832 1756 815 1766 788 1771 768 1767 740 1767 718 1771 708 1762 675 1754 640 1722 612 1697 590 1703 570 1662 545 1654 522 1640 507 1608 485 1582 450 1545 402 1538 398 1522 370 1522 345 1529 318 1513 305 1518 292 1512 298 1490 295 1470 302 1450 285 1412 268 1411 237 1385 233 1360 218 1328 219 1300 205 1293 187 1263 192 1246 157 1223 151 1196 162 1165 162 1135 187 1095 200 1075 218 1057Z"/>
        <path class="line" d="M222 1052L240 1042 283 1036 300 1034 315 1031 325 1045 360 1035 390 1024 410 997 430 987 446 950 465 960 475 990 445 1023 415 1050 430 1060 457 1083 450 1098 433 1120 440 1132 465 1143 482 1143 490 1162 508 1202 522 1202 535 1223 520 1250 556 1285 537 1325 561 1337 553 1355 565 1365 555 1382 540 1388 512 1407 493 1400 490 1386 478 1388 477 1415 455 1429 435 1433 436 1450 460 1455 445 1478 430 1480 427 1497 400 1520
        M487 802L482 820 463 835 485 840 497 827 507 842 530 853 543 875 531 905 540 928 553 945 570 969 587 958 615 960 622 934 635 939 650 935 670 924 690 944 720 960 738 960 747 950 758 965 790 972 838 986 857 970 860 945 852 925 844 900 857 893 880 903 915 911 945 950 970 965 1002 990 980 1020 990 1033 1020 1050 1040 1090 1055 1091 1068 1097 1090 1078 1140 1045 1147 1030 1180 1031 1208 1018 1210 1005 1240 962 1278 971 1284 953 1305 912 1325 910 1347 863
        M838 986L836 1000 808 1012 785 1004 770 1037 768 1055 757 1072 790 1087 825 1118 800 1159 767 1220 751 1273 768 1285 760 1325 777 1350 755 1368 735 1362 730 1372 742 1388 735 1400 718 1397 703 1406 738 1445 733 1475 755 1473 760 1487 777 1497 773 1540 780 1585 773 1605 781 1617 750 1647 732 1655 727 1695 708 1711 688 1712 685 1738 675 1754
        M1035 346L1072 341 1085 365 1105 398 1118 438 1130 460 1160 478 1180 492 1195 510 1203 527 1183 550 1208 570 1210 608 1190 635 1160 645 1150 662 1128 677 1133 687 1162 691 1187 680 1197 660 1208 670 1225 666 1265 672 1280 690 1267 700 1272 730 1268 772 1300 793 1318 825 1347 863 1372 846 1385 857 1405 868 1447 862 1458 825 1445 810 1450 790 1447 773 1458 765 1468 742 1490 745 1540 741 1595 728 1607 742 1603 762 1635 758 1647 732 1680 700 1720 697 1740 689 1770 684 1828 690 1847 706 1870 706 1897 726 1935 710 1955 720 1980 716 2010 717 2038 713 2070 724 2142 734 2154 719 2180 733 2210 748 2220 747 2228 722 2240 718 2252 710 2252 693 2228 688 2250 660 2280 643 2307 632 2333 642 2338 658 2345 648 2338 632 2350 635 2362 615 2370 633 2395 658 2418 654 2432 673 2450 672 2460 657 2477 650 2490 660 2510 660 2514 633 2545 644 2548 655 2575 656 2600 665 2618 677 2640 669 2642 690 2662 718 2705 727 2732 723 2757 749 2768 741 2785 747 2807 752 2796 775 2800 795 2820 805 2835 784 2870 777 2878 740 2895 743 2900 732 2906 747 2920 750 2940 741 2947 770 2965 790 2975 818 3015 837 3040 834 3063 849 3080 845 3088 834 3102 836 3128 822 3124 780 3120 730 3132 723 3148 733 3165 728 3215 752 3222 770 3260 781 3325 774 3325 737 3340 730 3363 696 3385 698 3402 753 3445 748 3478 753
        M1985 447L2001 475 1988 512 1996 520 2007 505 2025 500 2044 488 2018 520 2025 530 2050 537 2070 532 2065 575 2058 618 2028 624 2060 660 2067 690 2082 697 2070 710 2040 715
        M2210 748L2195 755 2192 775 2167 800 2167 825 2171 840 2157 870 2162 887 2172 888 2212 920 2228 950 2230 988 2250 990 2260 1002 2247 1050 2230 1080 2235 1108 2255 1123 2275 1119 2290 1127 2305 1117 2330 1117
        M1140 1045L1158 1065 1143 1085 1168 1082 1173 1110 1167 1130 1175 1162 1188 1170 1192 1205 1172 1245 1172 1257 1188 1227 1210 1228 1232 1220 1250 1222 1258 1200 1292 1163 1310 1190 1337 1208 1345 1240 1358 1258 1355 1295 1337 1308 1337 1335 1345 1352 1332 1370 1337 1390 1350 1382 1370 1391 1390 1396 1408 1390 1420 1380 1475 1364 1480 1356 1488 1365 1485 1400 1487 1420 1460 1460 1458 1470"/>
        <path d="M397 1205H436V1193L474 1218 436 1243V1231H397Z" fill="#bddcea" stroke="#000" stroke-width="14"/>
        <circle cx="490" cy="1216" r="3" fill="#e31a1c"/>
      </svg>
    </section>
  </main>

  <footer class="status">
    <div class="field locator"><svg viewBox="0 0 26 26"><circle cx="11" cy="10" r="8.500" fill="none" stroke="#999" stroke-width="2"/><path d="M17 17l6 7" stroke="#999" stroke-width="3"/></svg><span>Type to locate (Ctrl+K)</span></div>
    <span class="lbl coord"><em>Coordinate</em></span>
    <div class="field xy"><span>2416314 6120637</span></div>
    <svg class="mouse" viewBox="0 0 32 34"><path d="M2 9C4 1 15-1 18 6l4 9c9 0 9 8 6 13-4 5-12 5-14-2l-3-8C5 19 1 15 2 9z" fill="#ccc" stroke="#333" stroke-width="2"/><path d="M6 5l4 10M11 3l3 9M15 4l3 9M3 11l4 5M2 24l8-6M22 6l8-4M10 23l9-7" stroke="#222" stroke-width="2.500"/><circle cx="21" cy="24" r="5" fill="#eee" stroke="#333" stroke-width="2"/></svg>
    <span class="lbl scale-l"><em>Scale</em></span>
    <div class="field scale"><span>1:8417442</span><i class="btn"><svg viewBox="0 0 16 10"><use href="#grey-drop"/></svg></i></div>
    <svg class="lock" viewBox="0 0 24 30"><path d="M5 15V9c0-9 14-9 14 0v6" fill="none" stroke="#9a9a96" stroke-width="3.500"/><rect y="14" width="24" height="16" rx="3" fill="#666"/></svg>
    <span class="lbl mag-l"><em>Magnifier</em></span>
    <div class="field spin mag"><span>100%</span><i class="btn"><svg viewBox="0 0 20 24"><use href="#spinpair"/></svg></i></div>
    <span class="lbl rot-l"><em>Rotation</em></span>
    <div class="field spin rot"><span>0,0 °</span><i class="btn"><svg viewBox="0 0 20 24"><use href="#spinpair"/></svg></i></div>
    <span class="check"><svg viewBox="0 0 24 24"><path d="M6 13l4 6L19 4" fill="none" stroke="#000" stroke-width="3.200"/></svg></span>
    <span class="render">Render</span>
    <svg class="crs" viewBox="0 0 32 30"><circle cx="16" cy="15" r="14" fill="#8f8f8f"/><path d="M4 21h24M5 9h22M16 2v26M10 3c-4 8-4 16 0 24M22 3c4 8 4 16 0 24" stroke="#d0d0d0" stroke-width="1.200" fill="none"/><path d="M0 14h32" stroke="#777" stroke-width="2"/></svg>
    <span class="epsg">EPSG:3857</span>
  </footer>
</div>
</body>
</html>
```
FILE: styles.css
```css
* { box-sizing: border-box; }
html, body { margin: 0; height: 100%; overflow: hidden; }
body { background: #efefef; color: #000; font: 22px/1 "Noto Sans", "Open Sans", sans-serif; }
.defs { display: block; position: absolute; }
.app { width: 1920px; height: 1003px; display: flex; flex-direction: column; }

.titlebar { flex: 0 0 34px; display: flex; align-items: center; background: #00b7c6; padding: 0 28px 0 2px; }
.logo { width: 24px; height: 24px; }
.title { flex: 1; font-size: 17px; padding-left: 5px; white-space: nowrap; letter-spacing: -.1px; }
.wbtn { width: 16px; height: 16px; margin-left: 54px; }

.menubar { flex: 0 0 41px; display: grid; grid-template-columns: 101px 70px 80px 84.500px 113.500px 106.500px 95.500px 94px 128.500px 77.500px 86.500px 142.500px 78px; border-bottom: 2px solid #d8d8d8; padding-left: 4px; }
.menubar span { display: flex; justify-content: center; align-items: center; padding: 1px 6px 0 12px; white-space: pre; }
.menubar u { text-underline-offset: 4px; text-decoration-thickness: 2px; text-decoration-skip-ink: none; }

.toolbar { flex: 0 0 78px; display: flex; align-items: center; overflow: hidden; background: linear-gradient(#fbfbfb, #eee); border-bottom: 2px solid #b4b4b4; padding-top: 2px; }
.tool { flex: 0 0 65.900px; height: 62px; display: flex; align-items: center; justify-content: center; position: relative; }
.tool svg { width: 48px; height: 48px; overflow: visible; }
.tool.active { background: #dcdcdc; border: 2px solid #a8a8a8; border-radius: 5px; flex-basis: 63.900px; margin: 0 1.500px 0 .500px; }
.tool.off svg, .faded { opacity: .35; }
.tool .corner-drop { position: absolute; right: 6px; bottom: 4px; width: 12px; height: 8px; opacity: .5; }
.tool.diag { flex-basis: 69px; padding-left: 5px; }
.tool.edge { justify-content: flex-start; margin-left: 6px; }
.tool.edge svg.bigger { width: 38px; height: 38px; margin-top: -11px; }
.tool.book { margin-left: 9px; }
.grip { flex: 0 0 8px; height: 34px; margin: 0 8px 0 17px; background: radial-gradient(circle at 1.500px 2px, #b0b0b0 1.200px, transparent 1.500px) 0 0 / 5px 6px; }
.grip.first { margin: 0 7px 0 10px; }
.grip.narrow { margin-right: 4px; }
.grip.flush { margin-left: 0; }
.drop { flex: 0 0 23.500px; display: flex; justify-content: center; }
.drop svg { width: 15px; height: 9px; }
.drop.tight { flex-basis: 22.500px; }
.drop .lighter { opacity: .65; }
.more { flex: 0 0 46px; font-size: 28px; color: #333; text-align: right; padding-right: 1px; margin-top: -6px; }
.second .more { flex-basis: 91px; padding-right: 18px; }
.vsep { flex: 0 0 2px; height: 38px; background: #d4d4d4; margin: 0 6px; }
.t-a { font: bold 25px "Noto Sans", sans-serif; fill: #6a6a6a; }
.t-11 { font: bold 18px "Noto Sans", sans-serif; fill: #666; }
.t-abc { font: bold 16px "Noto Sans", sans-serif; fill: #3d3a1a; letter-spacing: -.4px; }
.t-ab { font: bold 18px "Noto Sans", sans-serif; fill: #333; }
.t-q { font: bold 34px "Noto Sans", sans-serif; fill: #e8eef5; }

.work { flex: 1; display: flex; min-height: 0; }
.docks { flex: 0 0 587px; display: flex; flex-direction: column; }
.dock-title { display: flex; align-items: center; height: 44px; padding: 1px 3px 0 8px; }
.dock-title span { flex: 1; font-size: 22px; padding-top: 1px; }
.dock-title svg { width: 22px; height: 22px; margin-left: 6px; margin-bottom: 4px; }
.dock-tools { display: flex; gap: 18px; align-items: center; height: 57px; padding: 0 0 8px 15px; }
.dock-tools svg { width: 32px; height: 34px; flex: none; }
.dock-tools svg.mini { width: 15px; height: 9px; margin: 0 -1px 0 -6px; }
.tree { border: 1px solid #b6b6b4; background: #fff; display: flex; overflow: hidden; }
.browser .tree { height: 253px; }
.rows { flex: 1; }
.row { height: 36px; display: flex; align-items: center; padding-left: 9px; }
.row svg, .row .tw { flex: none; }
.row .tw { width: 16px; height: 16px; margin-right: 14px; fill: #555; }
.row .ri { width: 33px; height: 33px; margin-right: 11px; }
.row span { padding-top: 4px; white-space: nowrap; letter-spacing: .25px; }
.l1 { padding-left: 41px; }
.l2 { padding-left: 73px; }
.l3 { padding-left: 105px; }
.hl { background: #efefef; width: 405px; }
.scroll { flex: 0 0 28px; display: flex; flex-direction: column; border-left: 1px solid #b6b6b4; background: #e3e3e3; }
.sb { height: 26px; background: #fafafa; display: flex; align-items: center; justify-content: center; border-bottom: 1px solid #b6b6b4; }
.sb svg { width: 16px; height: 12px; }
.sb.dn { border-bottom: 0; border-top: 1px solid #b6b6b4; flex: 1; }
.trk.a { height: 43px; }
.trk.b { height: 100px; }
.thumb { height: 55px; background: linear-gradient(90deg, #fdfdfd, #efefef); border: solid #b6b6b4; border-width: 1px 0; }
.hsplit { height: 12px; display: flex; justify-content: center; padding-top: 4px; }
.hsplit i { width: 32px; height: 4px; background: radial-gradient(circle, #999 1px, transparent 1.400px) 0 0 / 5.500px 4px; }
.layers { flex: 1; display: flex; flex-direction: column; }
.tree.list { flex: 1; display: block; }
.layer { display: flex; align-items: center; height: 37px; background: #efefef; padding-left: 47px; }
.layer b { padding-top: 4px; text-decoration: underline; text-underline-offset: 3px; text-decoration-thickness: 2px; text-decoration-skip-ink: none; font-size: 22px; }
.check { width: 28px; height: 28px; border: 2px solid #bababa; background: #fff; flex: none; }
.check svg { width: 24px; height: 24px; display: block; }
.swatch { width: 32px; height: 32px; background: #a6cee3; border: 1px solid #c08fa5; margin: 0 12px; }
.vsplit { flex: 0 0 14px; padding: 346px 0 0 6px; }
.vsplit i { display: block; width: 4px; height: 33px; background: radial-gradient(circle, #999 1px, transparent 1.400px) 0 0 / 4px 5.500px; }

.canvas { flex: 1; background: #fff; border-left: 1px solid #b6b6b4; border-bottom: 1px solid #b6b6b4; display: flex; flex-direction: column; min-width: 0; overflow: hidden; }
.message { flex: 0 0 60px; margin: 1px 0 0 -1px; border: 2px solid #b5cde6; border-right: 0; background: #e7f5fe; display: flex; align-items: flex-start; overflow: hidden; }
.bubble { width: 42px; height: 40px; margin: 7px 0 0 21px; flex: none; }
.message p { margin: 16px 0 0 22px; width: 959px; height: 38px; overflow: hidden; font-size: 21.500px; line-height: 28px; letter-spacing: -.410px; color: #2352a0; white-space: nowrap; flex: none; }
.message p span { letter-spacing: -.8px; }
.steps { display: flex; flex-direction: column; gap: 2px; margin: 8px 12px 0 0; flex: none; }
.steps span { width: 27px; height: 22px; border: 1px solid #fff; border-right: 2px solid #777; border-bottom: 2px solid #777; font-size: 12px; text-align: center; padding-top: 6px; color: #222; }
button { font: 21px/1 "Noto Sans", sans-serif; color: #000; width: 160px; height: 44px; margin: 6px 0 0; border: 2px solid #ababab; border-radius: 5px; background: linear-gradient(#fff, #f0f0f0); padding: 2px 0 0; flex: none; white-space: nowrap; }
.close { width: 32px; height: 32px; margin: 10px 0 0 60px; flex: none; }
.map { flex: 1; min-height: 0; width: 1318px; display: block; }
.land { fill: #a6cee3; }
.land, .line { stroke: #e31a1c; stroke-width: 6; stroke-linejoin: round; }
.line { fill: none; }

.status { flex: 0 0 52px; display: flex; align-items: center; font: 21px/1 "DejaVu Sans Condensed", "DejaVu Sans", sans-serif; font-stretch: condensed; padding: 6px 0 0 8px; white-space: nowrap; }
.field { border: 2px solid #ababab; border-radius: 5px; background: #fff; height: 43px; display: flex; align-items: center; flex: none; overflow: hidden; }
.field span { padding-top: 4px; }
.locator { width: 400px; padding-left: 15px; color: #808080; gap: 15px; font-family: "Noto Sans", sans-serif; }
.locator span { letter-spacing: .2px; }
.locator svg { width: 26px; height: 26px; }
.lbl { overflow: hidden; display: flex; justify-content: center; flex: none; height: 30px; align-items: center; padding-top: 3px; }
.lbl em { font-style: normal; }
.coord { width: 80px; margin: 0 6px 0 80px; }
.xy { width: 205px; padding-left: 12px; letter-spacing: .050px; }
.mouse { width: 32px; height: 34px; margin: 0 23px 0 8px; flex: none; }
.scale-l { width: 29px; margin: 0 6px 0 2px; }
.scale { width: 159px; padding-left: 6px; justify-content: space-between; }
.btn { align-self: stretch; border-left: 2px solid #c4c4c4; background: linear-gradient(#fff, #f0f0f0); display: flex; align-items: center; justify-content: center; width: 41px; }
.btn svg { width: 15px; height: 9px; }
.lock { width: 24px; height: 30px; margin: 0 17px 0 24px; flex: none; }
.mag-l { width: 64px; margin-right: 6px; }
.spin { height: 39px; width: 167px; justify-content: space-between; padding-left: 8px; }
.spin .btn { width: 29px; }
.spin .btn svg { width: 15px; height: 24px; }
.rot-l { width: 56px; margin: 0 18px 0 19px; }
.status .check { margin: 0 11px 0 13px; }
.render { width: 98px; flex: none; padding-top: 3px; }
.crs { width: 32px; height: 30px; margin-right: 5px; flex: none; }
.epsg { flex: none; padding-top: 4px; }
```
